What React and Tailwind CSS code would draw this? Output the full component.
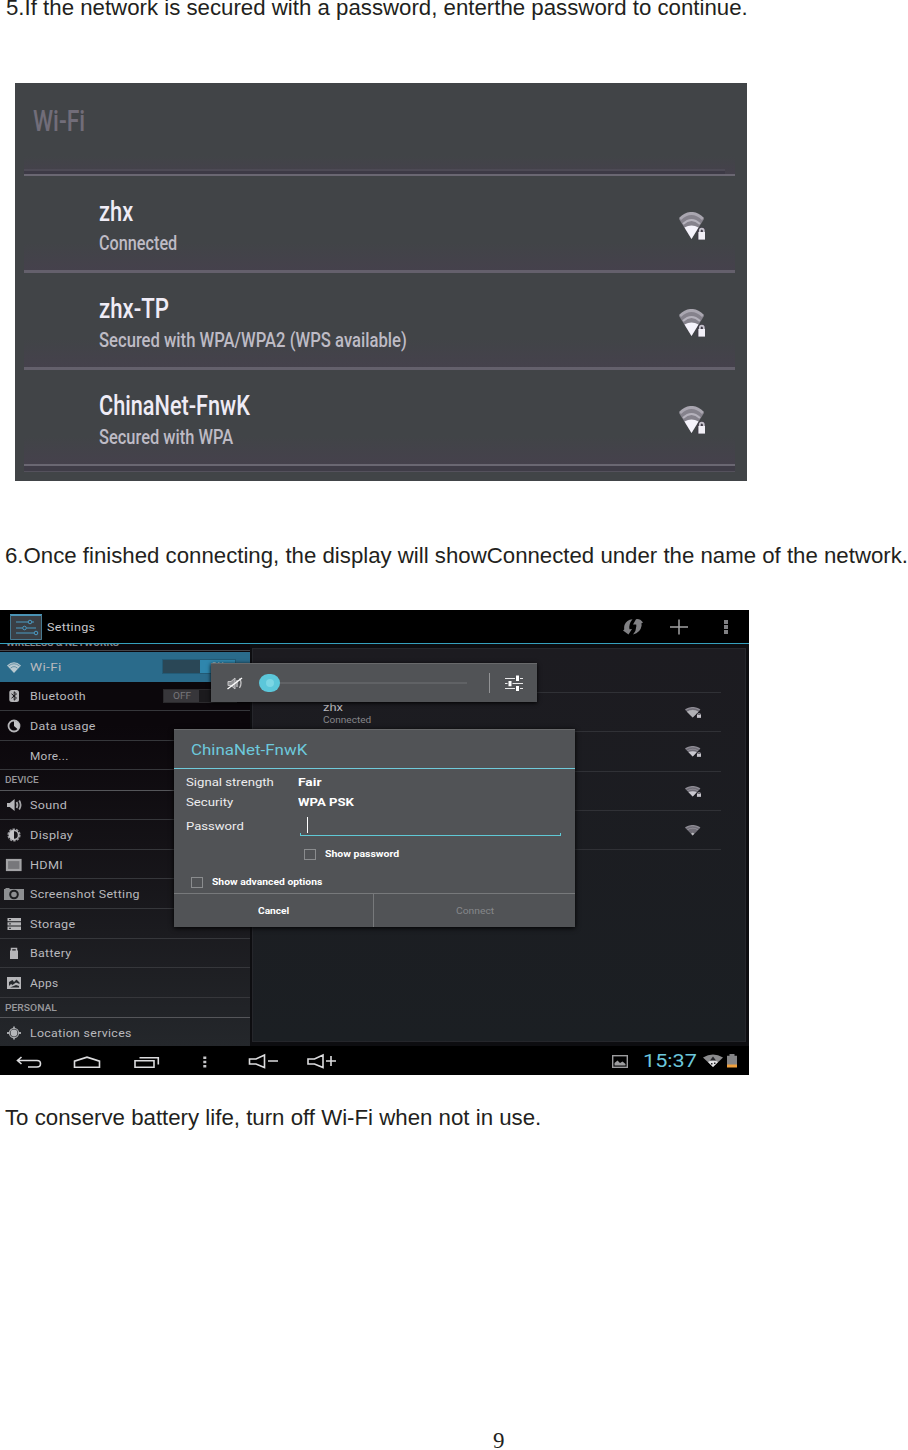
import { useLayoutEffect, useRef, useState } from 'react';

const roboto = "font-['Roboto',sans-serif]";

// One line of text stretched or condensed to an exact width
function Fit({ w, className = '', children }) {
    const ref = useRef(null);
    const [scale, setScale] = useState(1);

    useLayoutEffect(() => {
        setScale(w / ref.current.offsetWidth);
    }, [w]);

    return (
        <span className={`block shrink-0 whitespace-nowrap ${className}`} style={{ width: w }}>
            <span ref={ref} className="inline-block origin-left" style={{ transform: `scaleX(${scale})` }}>{children}</span>
        </span>
    );
}

function WifiLock({ className, level = 1, lock = true, gap = '#1c1b20' }) {
    return (
        <svg viewBox="0 0 26 28" preserveAspectRatio="none" className={className}>
            <path d="M0 7 Q12.5 -5 25 7 L12.5 27 Z" fill="#85828c" />
            <path d="M1 7 Q12.5 -4 24 7" fill="none" stroke="#a9a6b0" strokeWidth="3" />
            <path d="M4 12 Q12.5 4 21 12" fill="none" stroke="#b5b2bc" strokeWidth="2" />
            {level === 2 && <path d="M3 12 Q12.5 3 22 12 L12.5 27 Z" fill="#d6d6da" />}
            {level === 1 && <path d="M5.5 15.5 Q12.5 11.5 19.5 15.5 L12.5 27 Z" fill="#f5f3fb" />}
            {level === 0 && <path d="M10 22 Q12.5 18 15 22 L12.5 27 Z" fill="#e5e5e8" />}
            {lock && (
                <>
                    <path d="M18 28 V19 L20 15.5 H26 V28 Z" fill={gap} />
                    <path d="M20.8 21 v-2 a2 2.4 0 0 1 4 0 v2" fill="none" stroke="#c5c2cc" strokeWidth="1.8" />
                    <rect x="19.4" y="20" width="6.6" height="7.6" fill="#f1eff6" />
                </>
            )}
        </svg>
    );
}

const networks = [
    { name: 'zhx', nameW: 34, status: 'Connected', statusW: 78 },
    { name: 'zhx-TP', nameW: 70, status: 'Secured with WPA/WPA2 (WPS available)', statusW: 308 },
    { name: 'ChinaNet-FnwK', nameW: 151, status: 'Secured with WPA', statusW: 134 },
];

function NetworkList() {
    return (
        <div className={`ml-[15px] h-[398px] w-[732px] bg-[#414447] pr-3 pl-[9px] ${roboto}`}>
            <div className="flex h-[91px] flex-col justify-between bg-linear-to-b from-[#414447] from-80% to-[#45414c] pt-[23px]">
                <Fit w={52} className="ml-[9px] text-[29px] leading-[31px] font-medium text-[#716d79]">Wi-Fi</Fit>
                <div className="mr-2.5 h-[5px] border-t-2 border-[#4d4a55] bg-[#3d3a46]"></div>
            </div>
            <div className="h-0.5 bg-[#6a6772]"></div>
            {networks.map((n, i) => (
                <div key={n.name}>
                    <div className="flex h-[94px] bg-linear-to-b from-[#414447] from-70% to-[#45414c] pt-[21px] pl-[75px]">
                        <div className="grow">
                            <Fit w={n.nameW} className="text-[27px] leading-[31px] font-medium text-[#efecf6]">{n.name}</Fit>
                            <Fit w={n.statusW} className="text-[21px] leading-[31px] font-medium text-[#bebbc5]">{n.status}</Fit>
                        </div>
                        <WifiLock gap="#413d48" className="mt-[15px] mr-[30px] h-[28px] w-[26px]" />
                    </div>
                    {i < 2 ? (
                        <div className="h-[3px] bg-[#64606c]"></div>
                    ) : (
                        <div className="h-2 border-t-2 border-b border-t-[#6a6772] border-b-[#54515c] bg-[#3f3c47]"></div>
                    )}
                </div>
            ))}
        </div>
    );
}

const icons = {
    wifi: (
        <>
            <path d="M0 4.5 Q7 -2 14 4.5 L7 12 Z" fill="#b9c9d0" />
            <path d="M1.5 5 Q7 0.5 12.5 5 M3.5 7.2 Q7 4 10.5 7.2" fill="none" stroke="#55879c" strokeWidth=".8" />
        </>
    ),
    bluetooth: (
        <>
            <rect x="2.3" y="0" width="9.7" height="12" rx="2.5" fill="#b5b5b8" />
            <path d="M4.5 3.8 L9.5 8 L7.2 10.2 V1.8 L9.5 4 L4.5 8.2" fill="none" stroke="#18161a" />
        </>
    ),
    data: (
        <>
            <circle cx="7" cy="6" r="5.5" fill="none" stroke="#b5b5b8" strokeWidth="1.8" />
            <path d="M7 6 V1 A5 5 0 0 1 11 9.4 Z" fill="#c4c4c7" />
        </>
    ),
    sound: (
        <>
            <path d="M0 4 H2.8 L7.6 0 V12 L2.8 8 H0 Z" fill="#b5b5b8" />
            <path d="M9.6 3 Q11.3 6 9.6 9 M12.2 1.5 Q15 6 12.2 10.5" fill="none" stroke="#a5a5a8" strokeWidth="1.8" />
        </>
    ),
    display: (
        <>
            <circle cx="7" cy="6" r="5.8" fill="none" stroke="#98989c" strokeWidth="1.6" strokeDasharray="2.4 1.2" />
            <circle cx="7" cy="6" r="4.6" fill="#17161a" stroke="#b5b5b8" strokeWidth="1.6" />
            <path d="M7 1.2 V10.8 A4.8 4.8 0 0 1 7 1.2 Z" fill="#c4c4c7" />
        </>
    ),
    hdmi: <rect x="0" y="1" width="13.5" height="10" fill="#77777b" stroke="#a3a3a6" strokeWidth="2.2" />,
    camera: (
        <>
            <path d="M-3 1 H-1.5 V0 H2.5 V1 H17 V12 H-3 Z" fill="#8d8f92" />
            <circle cx="7" cy="6.5" r="3.8" fill="#8d8f92" stroke="#1b1d20" strokeWidth="2" />
        </>
    ),
    storage: (
        <>
            <path d="M.5 0 H14 V3.2 H.5 Z M.5 4.3 H14 V7.5 H.5 Z M.5 8.6 H14 V12 H.5 Z" fill="#b5b5b8" />
            <path d="M2 1.6 H4 M2 5.9 H4 M2 10.3 H4" stroke="#2a2c30" />
        </>
    ),
    battery: (
        <>
            <rect x="3" y="3.5" width="8" height="8.5" fill="#b5b5b8" />
            <path d="M4.5 4 V1.5 H9.5 V4" fill="none" stroke="#b5b5b8" strokeWidth="1.5" />
        </>
    ),
    apps: (
        <>
            <path d="M0 0 H14 V12 H0 Z" fill="#b5b5b8" />
            <path d="M2 9 V5 L5.5 3 L7 5 L9.5 2.5 L12.5 5.5 V7 L9 5.5 L5.5 8 L4 7 Z M3 10.5 L9 8 L12 9 V10.5 Z" fill="#26292d" />
        </>
    ),
    location: (
        <>
            <circle cx="7" cy="6" r="4.6" fill="none" stroke="#a5a7aa" strokeWidth="1.2" />
            <circle cx="7" cy="6" r="3.4" fill="#b5b7ba" />
            <path d="M7 -.5 V2 M7 10 V12.5 M0 6 H3 M11 6 H14" stroke="#a5a7aa" strokeWidth="1.8" />
        </>
    ),
};

function MenuRow({ icon, label, w, selected, children }) {
    return (
        <div className={`flex h-[29.6px] items-center border-b pt-px pl-[7px] ${selected ? 'border-[#2a6b8b] bg-[#2a6b8b]' : 'border-[#36373b]'}`}>
            <svg viewBox="0 0 14 12" className="mr-[9px] h-3 w-3.5 shrink-0 overflow-visible">{icon && icons[icon]}</svg>
            <Fit w={w} className="text-[11.5px] leading-4 tracking-wide text-[#b9b9bd]">{label}</Fit>
            {children}
        </div>
    );
}

function SectionLabel({ w, children }) {
    return (
        <div className="h-[20.3px] border-b border-[#55565a] pt-[3px] pl-[5px]">
            <Fit w={w} className="text-[8.5px] leading-[14px] font-medium text-[#97979b]">{children}</Fit>
        </div>
    );
}

function Sidebar() {
    return (
        <div className="w-[250px] shrink-0 overflow-hidden bg-linear-to-b from-[#0b070b] from-20% to-[#24272b]">
            <div className="flex h-[2px] items-end overflow-hidden pl-1.5">
                <Fit w={113} className="-mb-[4px] text-[9px] leading-[14px] font-bold text-[#85858a]">WIRELESS &amp; NETWORKS</Fit>
            </div>
            <div className="mt-1 mb-px h-px bg-[#44454a]"></div>
            <MenuRow icon="wifi" label="Wi-Fi" w={32} selected>
                <div className="ml-auto flex h-[15px] w-[74px] border border-[#235b76] bg-[#2a4756]">
                    <div className="ml-[37px] w-[37px] bg-[#2f86ad] pl-[11px] text-[9px] leading-[13px] text-[#9fc4d3]">ON</div>
                </div>
                <div className="w-[14px]"></div>
            </MenuRow>
            <MenuRow icon="bluetooth" label="Bluetooth" w={56}>
                <div className="ml-auto flex h-[14px] w-[74px] border border-[#2b2a2d] bg-[#1b1a1d]">
                    <div className="flex w-[35px] justify-center bg-[#37363a]">
                        <Fit w={18} className="text-[9px] leading-[13px] text-[#77777b]">OFF</Fit>
                    </div>
                </div>
                <div className="w-[13px]"></div>
            </MenuRow>
            <MenuRow icon="data" label="Data usage" w={66} />
            <MenuRow label="More..." w={39} />
            <SectionLabel w={34}>DEVICE</SectionLabel>
            <MenuRow icon="sound" label="Sound" w={37} />
            <MenuRow icon="display" label="Display" w={43} />
            <MenuRow icon="hdmi" label="HDMI" w={33} />
            <MenuRow icon="camera" label="Screenshot Setting" w={110} />
            <MenuRow icon="storage" label="Storage" w={46} />
            <MenuRow icon="battery" label="Battery" w={42} />
            <MenuRow icon="apps" label="Apps" w={29} />
            <SectionLabel w={52}>PERSONAL</SectionLabel>
            <MenuRow icon="location" label="Location services" w={102} />
        </div>
    );
}

function DetailPane() {
    return (
        <div className="flex grow bg-[#0d0d10] pt-1 pr-[3px] pb-1 pl-0.5">
            <div className="grow border border-[#25262b] bg-linear-to-b from-[#1c1b20] to-[#1b1f23] pr-6 pl-[28px]">
                <div className="h-[44px] border-b border-[#303136]"></div>
                {[2, 1, 1, 0].map((level, i) => (
                    <div key={i} className="flex h-[39.3px] items-center border-b border-[#303136] pt-px pl-[42px]">
                        {i === 0 && (
                            <div className="pt-[3px]">
                                <Fit w={20} className="text-[11px] leading-[13px] text-[#b9b9bd]">zhx</Fit>
                                <Fit w={48} className="text-[9px] leading-[13px] text-[#85858a]">Connected</Fit>
                            </div>
                        )}
                        <WifiLock level={level} lock={i < 3} className="mr-5 ml-auto h-[11px] w-4 opacity-80" />
                    </div>
                ))}
            </div>
        </div>
    );
}

function VolumeBar() {
    return (
        <div className="absolute top-[53px] left-[211px] flex h-[39px] w-[326px] items-center border-t border-[#68696b] bg-[#515356] shadow-[0_1px_4px_#000]">
            <svg viewBox="0 0 16 13" className="ml-4 h-[13px] w-4" fill="none" stroke="#c5c5c7">
                <path d="M1 4.5 H4 L8 1 V12 L4 8.5 H1 Z" fill="#8f9093" />
                <path d="M10 3 V10 M12.5 1.5 Q15.5 6 12.5 11" strokeWidth="1.3" />
                <path d="M.5 12 L15 1" stroke="#fff" strokeWidth="1.4" />
            </svg>
            <div className="ml-4 flex h-[18px] w-[21px] items-center justify-center rounded-full bg-[#5cc7da]">
                <div className="h-2 w-2 rounded-full bg-[#7bd6e4]"></div>
            </div>
            <div className="h-0.5 w-[187px] bg-[#606265]"></div>
            <div className="ml-[22px] h-5 w-px bg-[#929395]"></div>
            <svg viewBox="0 0 18 16" className="ml-[15px] h-4 w-[18px]" stroke="#e9e9ea">
                <path d="M0 3.5 H18 M0 8.5 H18 M0 13.5 H18" strokeWidth="1.2" />
                <path d="M12.5 .5 V6 M5 6 V11.2 M12.5 11 V16" stroke="#515356" strokeWidth="5" />
                <path d="M12.5 .5 V6 M5 6 V11.2 M12.5 11 V16" strokeWidth="3" stroke="#fff" />
            </svg>
        </div>
    );
}

function Dialog() {
    return (
        <div className="absolute top-[119px] left-[174px] flex h-[198px] w-[401px] flex-col border-t border-[#68696b] bg-[#515356] text-[#ededee] shadow-[0_1px_5px_#000]">
            <div className="flex h-[39px] items-center border-b border-[#70cbdb] pt-px pl-[17px]">
                <Fit w={116} className="text-[14px] leading-5 text-[#6dc9dc]">ChinaNet-FnwK</Fit>
            </div>
            <div className="flex pt-[3px] pl-3">
                <div className="w-[112px] text-[11.5px] leading-5">
                    <Fit w={88}>Signal strength</Fit>
                    <Fit w={47}>Security</Fit>
                    <Fit w={58} className="mt-1">Password</Fit>
                </div>
                <div>
                    <div className="text-[11.5px] leading-5 font-bold text-white">
                        <Fit w={24}>Fair</Fit>
                        <Fit w={56}>WPA PSK</Fit>
                    </div>
                    <div className="ml-0.5 flex h-[24px] w-[261px] flex-col justify-end">
                        <div className="ml-[7px] h-[16px] w-px bg-white"></div>
                        <div className="h-[3px] border-x border-b border-[#5fc9d6]"></div>
                    </div>
                    <div className="mt-2.5 ml-1.5 flex h-4 items-center">
                        <div className="mr-[9px] h-[11px] w-3 border border-[#8a8c8e]"></div>
                        <Fit w={74} className="text-[9.5px] leading-4 font-bold text-white">Show password</Fit>
                    </div>
                </div>
            </div>
            <div className="mt-3 ml-[17px] flex h-4 items-center">
                <div className="mr-[9px] h-[11px] w-3 border border-[#8a8c8e]"></div>
                <Fit w={110} className="text-[9.5px] leading-4 font-bold text-white">Show advanced options</Fit>
            </div>
            <div className="mt-auto flex h-[34px] border-t border-[#77797b] text-[9.5px] leading-[33px]">
                <div className="flex w-[200px] justify-center border-r border-[#77797b] font-bold text-white">
                    <Fit w={31}>Cancel</Fit>
                </div>
                <div className="flex grow justify-center pl-px text-[#85878a]">
                    <Fit w={38}>Connect</Fit>
                </div>
            </div>
        </div>
    );
}

function NavBar() {
    return (
        <div className="flex h-[29px] items-center bg-black pl-4">
            <svg viewBox="0 0 325 20" className="h-5 w-[325px]" fill="none" stroke="#dcdcde" strokeWidth="1.6">
                <path d="M5.5 6 L1.5 9.5 L5.5 13 M1.5 9.5 H21 Q24.5 9.5 24.5 12.7 Q24.5 16 21 16 H12" />
                <path d="M58.5 16.3 V10.2 L71 6.2 L83.5 10.2 V16.3 Z" />
                <path d="M119 9.8 H138 V16.2 H119 Z M123.5 6.8 H142.3 V13.5" />
                <path d="M187.3 5.5 h3 v2.6 h-3 Z M187.3 9.7 h3 v2.6 h-3 Z M187.3 13.9 h3 v2.6 h-3 Z" fill="#c6c6c8" stroke="none" />
                <path d="M233.5 8 H240 L248.5 4 V16.5 L240 13 H233.5 Z M252 10 H262" />
                <path d="M292 8 H298.5 L307 4 V16.5 L298.5 13 H292 Z M310 10 H320 M315 5 V15" />
            </svg>
            <svg viewBox="0 0 16 13" className="mt-px ml-[271px] h-[13px] w-4">
                <rect x=".7" y=".7" width="14.6" height="11.6" fill="none" stroke="#9c9c9e" strokeWidth="1.4" />
                <path d="M2.5 10.5 V8 L5.5 5.5 L8 8 L10.5 6.5 L13.5 9 V10.5 Z" fill="#9c9c9e" />
            </svg>
            <Fit w={54} className="mt-px ml-[15px] text-[18px] leading-5 text-[#6cc7dc]">15:37</Fit>
            <svg viewBox="0 0 20 13" className="ml-[6px] h-[13px] w-5">
                <path d="M0 3.5 Q10 -2.5 20 3.5 L10 13 Z" fill="#8b8b8d" />
                <path d="M5 8 Q10 4.5 15 8 L10 13 Z" fill="#e2e2e4" />
                <path d="M10 2.5 L13 6.5 H7 Z M8 9 h1.5 v1.5 h-1.5 Z M11 8.5 h1.5 v1.5 h-1.5 Z" fill="#26262a" />
            </svg>
            <svg viewBox="0 0 10 14" className="ml-1 h-3.5 w-2.5">
                <path d="M0 1.8 H2.5 V0 H7.5 V1.8 H10 V11 H0 Z" fill="#858587" />
                <rect y="10.5" width="10" height="3" fill="#f0a03c" />
            </svg>
        </div>
    );
}

function SettingsScreen() {
    return (
        <div className={`relative flex h-[465px] w-[749px] flex-col overflow-hidden bg-black ${roboto}`}>
            <div className="flex h-[34px] shrink-0 items-center border-b border-[#35a0bd] pl-2.5">
                <svg viewBox="0 0 32 26" className="h-[26px] w-8" fill="none" stroke="#4b9bc4">
                    <rect width="32" height="26" fill="#3a3f45" stroke="none" />
                    <path d="M0 1 H32" stroke="#4a93b5" strokeWidth="2" />
                    <path d="M.5 1 V25.5 H31.5 V1" stroke="#477a92" />
                    <path d="M6 8 H18 M22 8 H24 M6 14 H12.5 M16.5 14 H26 M6 19 H24" strokeWidth="1.2" />
                    <circle cx="20" cy="8" r="1.8" />
                    <circle cx="14.5" cy="14" r="1.8" />
                    <circle cx="26" cy="19" r="1.8" />
                </svg>
                <Fit w={48} className="mt-px ml-[5px] text-[11.5px] leading-5 tracking-wide text-[#c9c9cb]">Settings</Fit>
                <svg viewBox="0 0 20 16" className="ml-auto h-4 w-5" fill="#818184">
                    <path d="M9.5 .3 Q3.5 1 1.5 6 Q.8 8.5 1.2 10.5 L0 11.5 L5.5 15.5 L9 10 L6.5 10.2 Q5.5 5 9.5 .3 Z" />
                    <path d="M10 15.5 Q17.5 13.5 18.5 7 Q18.8 5.5 18.3 4.5 L20 3.5 Q17 -.5 13 .2 L10 5.5 L13.2 5.5 Q14 11 10 15.5 Z" />
                </svg>
                <svg viewBox="0 0 18 16" className="ml-[27px] h-4 w-[18px]" stroke="#a2a2a4" strokeWidth="1.5">
                    <path d="M0 8 H18 M9 .5 V15.5" />
                </svg>
                <div className="mr-[21px] ml-9 flex flex-col gap-px">
                    <div className="h-1 w-1 bg-[#808083]"></div>
                    <div className="h-1 w-1 bg-[#808083]"></div>
                    <div className="h-1 w-1 bg-[#808083]"></div>
                </div>
            </div>
            <div className="flex h-[402px] shrink-0">
                <Sidebar />
                <DetailPane />
            </div>
            <NavBar />
            <VolumeBar />
            <Dialog />
        </div>
    );
}

export default function App() {
    return (
        <main className="h-[1450px] w-[908px] overflow-hidden bg-white font-['Liberation_Sans',sans-serif] text-[22px] text-[#231f20]">
            <Fit w={742} className="ml-[5.5px] h-[83px] leading-4">5.If the network is secured with a password, enterthe password to continue.</Fit>
            <NetworkList />
            <Fit w={903} className="mt-[60px] ml-[5px] h-[69px] leading-[30px]">6.Once finished connecting, the display will showConnected under the name of the network.</Fit>
            <SettingsScreen />
            <Fit w={536} className="mt-[28px] ml-[5px] h-[325px] leading-[30px]">To conserve battery life, turn off Wi-Fi when not in use.</Fit>
            <Fit w={12} className="ml-[493px] font-['Liberation_Serif',serif] text-[23px] leading-[26px]">9</Fit>
        </main>
    );
}
